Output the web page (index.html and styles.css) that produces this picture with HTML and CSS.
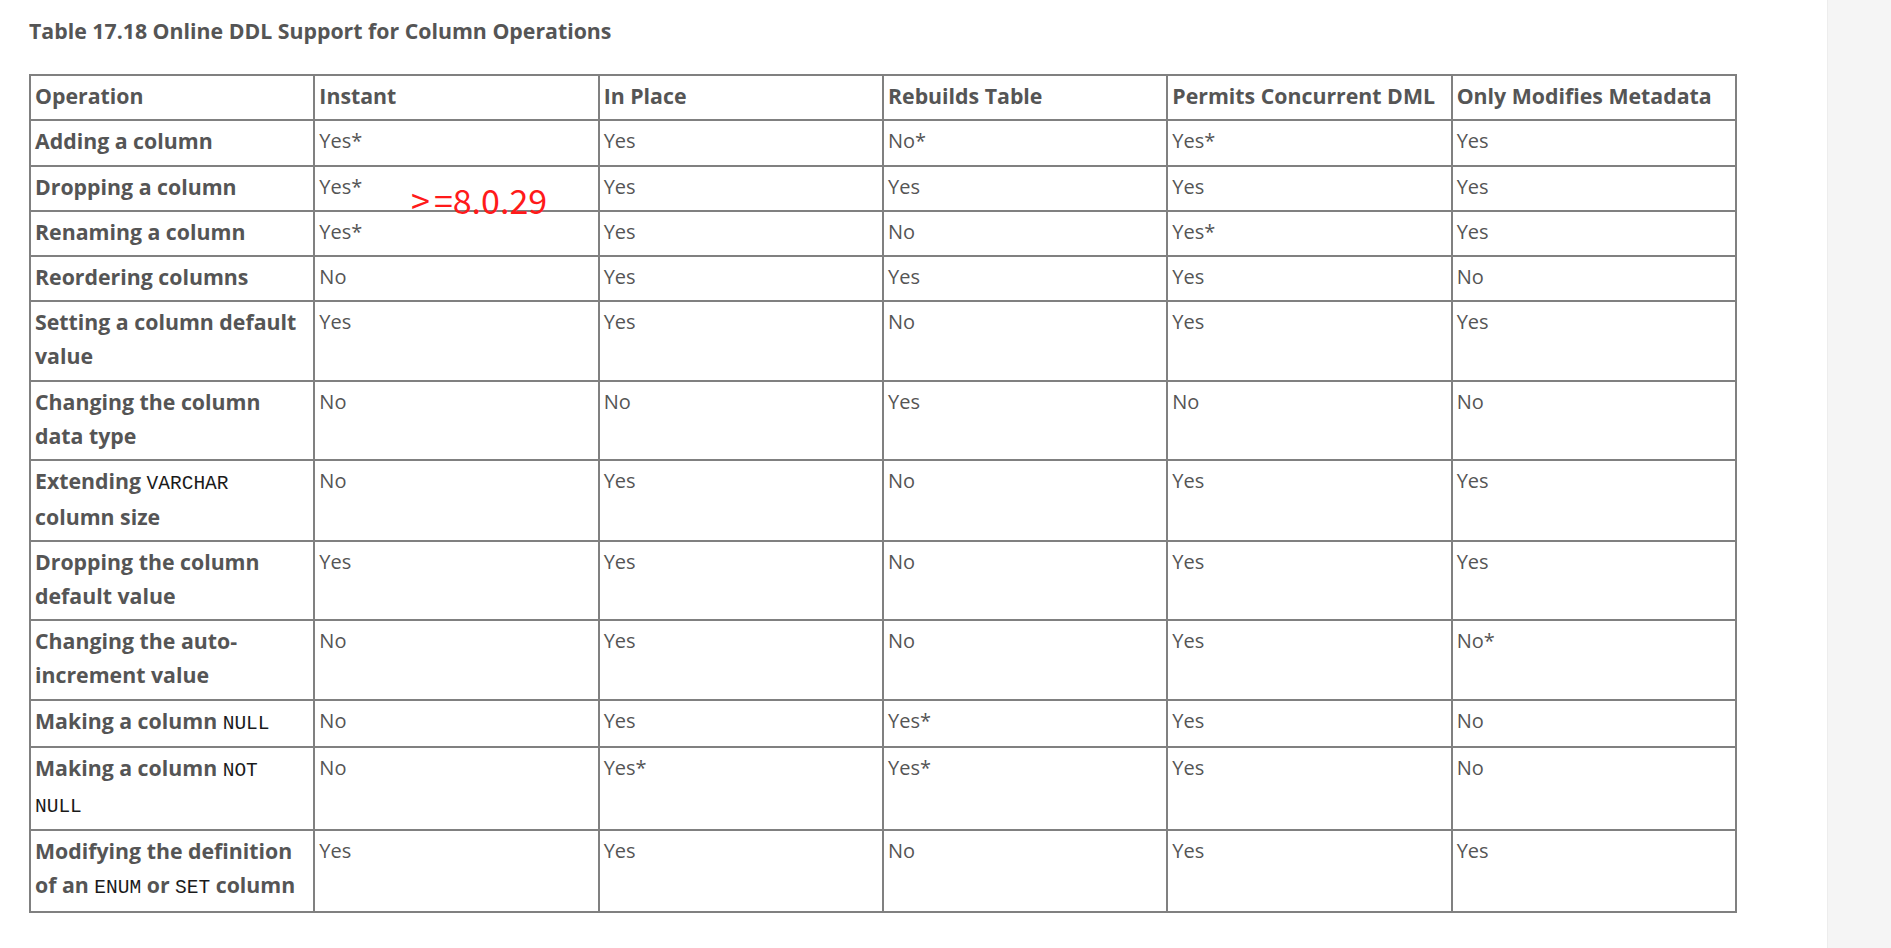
FILE: index.html
```html
<!DOCTYPE html>
<html lang="en">
<head>
<meta charset="utf-8">
<title>Online DDL Support for Column Operations</title>
<link rel="stylesheet" href="styles.css">
</head>
<body>
<div class="page">
  <main class="content">
    <p class="table-title">Table 17.18 Online DDL Support for Column Operations</p>
    <div class="table-wrap">
      <table class="ddl">
        <colgroup>
          <col class="c"><col class="c"><col class="c"><col class="c"><col class="c"><col class="c">
        </colgroup>
        <thead>
          <tr><th>Operation</th><th>Instant</th><th>In Place</th><th>Rebuilds Table</th><th>Permits Concurrent DML</th><th>Only Modifies Metadata</th></tr>
        </thead>
        <tbody>
          <tr><th>Adding a column</th><td>Yes*</td><td>Yes</td><td>No*</td><td>Yes*</td><td>Yes</td></tr>
          <tr><th>Dropping a column</th><td>Yes*</td><td>Yes</td><td>Yes</td><td>Yes</td><td>Yes</td></tr>
          <tr><th>Renaming a column</th><td>Yes*</td><td>Yes</td><td>No</td><td>Yes*</td><td>Yes</td></tr>
          <tr><th>Reordering columns</th><td>No</td><td>Yes</td><td>Yes</td><td>Yes</td><td>No</td></tr>
          <tr><th>Setting a column default value</th><td>Yes</td><td>Yes</td><td>No</td><td>Yes</td><td>Yes</td></tr>
          <tr><th>Changing the column data type</th><td>No</td><td>No</td><td>Yes</td><td>No</td><td>No</td></tr>
          <tr><th>Extending <code>VARCHAR</code> column size</th><td>No</td><td>Yes</td><td>No</td><td>Yes</td><td>Yes</td></tr>
          <tr><th>Dropping the column default value</th><td>Yes</td><td>Yes</td><td>No</td><td>Yes</td><td>Yes</td></tr>
          <tr><th>Changing the auto-increment value</th><td>No</td><td>Yes</td><td>No</td><td>Yes</td><td>No*</td></tr>
          <tr><th>Making a column <code>NULL</code></th><td>No</td><td>Yes</td><td>Yes*</td><td>Yes</td><td>No</td></tr>
          <tr><th>Making a column <code>NOT NULL</code></th><td>No</td><td>Yes*</td><td>Yes*</td><td>Yes</td><td>No</td></tr>
          <tr><th>Modifying the definition of an <code>ENUM</code> or <code>SET</code> column</th><td>Yes</td><td>Yes</td><td>No</td><td>Yes</td><td>Yes</td></tr>
        </tbody>
      </table>
      <span class="annotation"><span class="gt">&gt;</span>=8.0.29</span>
    </div>
  </main>
  <aside class="sidebar"></aside>
</div>
</body>
</html>
```

FILE: styles.css
```css
html, body {
  margin: 0;
  padding: 0;
  background: #ffffff;
}

body {
  font-family: "Open Sans", "Liberation Sans", sans-serif;
  color: #555555;
}

.page {
  display: flex;
  min-height: 948px;
}

.content {
  flex: 1;
  padding: 17px 0 0 29px;
}

.sidebar {
  width: 63px;
  background: #f5f5f5;
  border-left: 1px solid #ededed;
}

.table-title {
  margin: 0 0 29px 0;
  font-size: 21.3px;
  font-weight: 700;
  line-height: 28px;
  color: #555555;
}

.table-wrap {
  position: relative;
  width: 1708px;
}

.ddl {
  width: 1708px;
  table-layout: fixed;
  border-collapse: collapse;
  font-size: 20px;
  line-height: 33.9px;
}

.ddl .c {
  width: 16.666%;
}

.ddl th,
.ddl td {
  border: 2px solid #808080;
  padding: 3px 4px 6.4px 4px;
  text-align: left;
  vertical-align: top;
  color: #555555;
}

.ddl th {
  font-size: 21.3px;
  font-weight: 700;
}

.ddl td {
  font-weight: 400;
}

.ddl code {
  font-family: "Liberation Mono", "DejaVu Sans Mono", monospace;
  font-size: 19.5px;
  font-weight: 400;
  line-height: 32px;
  color: #1a1a1a;
}

.annotation {
  position: absolute;
  left: 382px;
  top: 109px;
  font-family: "Noto Sans CJK SC", "Noto Sans", sans-serif;
  font-size: 34px;
  line-height: 1;
  color: #ff1a1a;
  white-space: nowrap;
}

.annotation .gt {
  margin-right: 4px;
}
```
